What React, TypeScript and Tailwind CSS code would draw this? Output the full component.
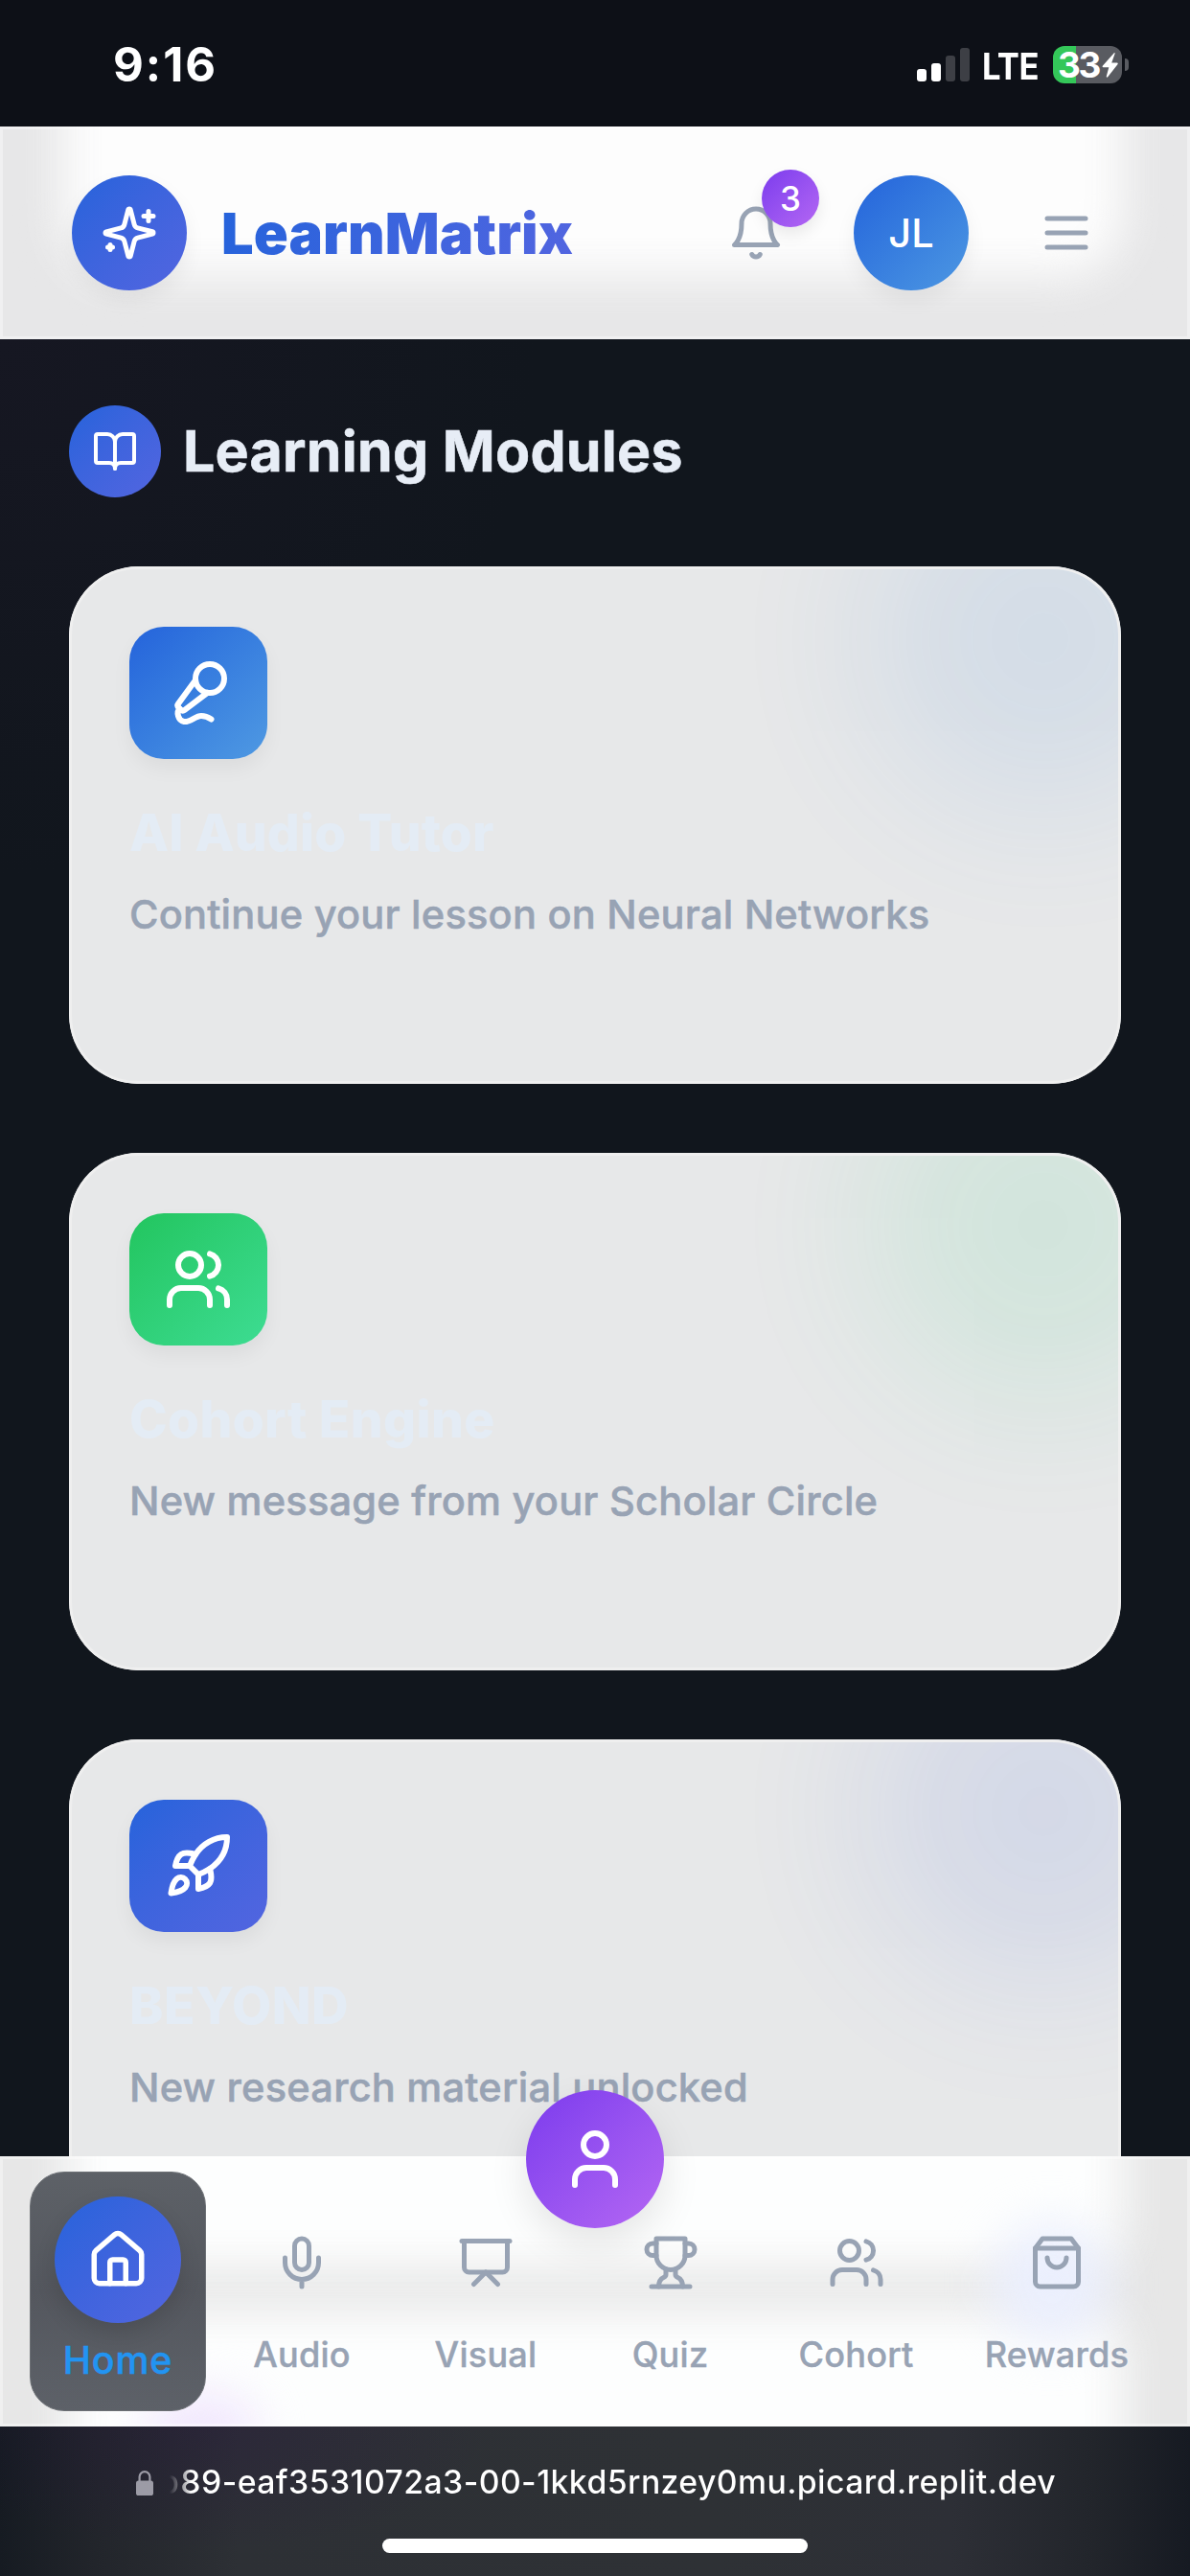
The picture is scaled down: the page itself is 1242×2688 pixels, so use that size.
import React from "react";

type IconProps = { className: string; children: React.ReactNode };

function Icon({ className, children }: IconProps) {
  return (
    <svg
      viewBox="0 0 24 24"
      fill="none"
      stroke="currentColor"
      strokeWidth={2}
      strokeLinecap="round"
      strokeLinejoin="round"
      className={`shrink-0 ${className}`}
    >
      {children}
    </svg>
  );
}

const sparkles = (
  <>
    <path d="M9.937 15.5A2 2 0 0 0 8.5 14.063l-6.135-1.582a.5.5 0 0 1 0-.962L8.5 9.936A2 2 0 0 0 9.937 8.5l1.582-6.135a.5.5 0 0 1 .963 0L14.063 8.5A2 2 0 0 0 15.5 9.937l6.135 1.581a.5.5 0 0 1 0 .964L15.5 14.063a2 2 0 0 0-1.437 1.437l-1.582 6.135a.5.5 0 0 1-.963 0z" />
    <path d="M20 3v4M22 5h-4M4 17v2M5 18H3" />
  </>
);
const bell = (
  <>
    <path d="M6 8a6 6 0 0 1 12 0c0 7 3 9 3 9H3s3-2 3-9" />
    <path d="M10.3 21a1.94 1.94 0 0 0 3.4 0" />
  </>
);
const menu = <path d="M4 6h16M4 12h16M4 18h16" />;
const book = (
  <>
    <path d="M12 7v14" />
    <path d="M3 18a1 1 0 0 1-1-1V4a1 1 0 0 1 1-1h5a4 4 0 0 1 4 4 4 4 0 0 1 4-4h5a1 1 0 0 1 1 1v13a1 1 0 0 1-1 1h-6a3 3 0 0 0-3 3 3 3 0 0 0-3-3z" />
  </>
);
const micVocal = (
  <>
    <path d="m11 7.601-5.994 8.19a1 1 0 0 0 .1 1.298l.817.818a1 1 0 0 0 1.314.087L15.09 12" />
    <path d="M16.5 21.174C15.5 20.5 14.372 20 13 20c-2.058 0-3.928 2.356-6 2-2.072-.356-2.775-3.369-1.5-4.5" />
    <circle cx="16" cy="7" r="5" />
  </>
);
const users = (
  <>
    <path d="M16 21v-2a4 4 0 0 0-4-4H6a4 4 0 0 0-4 4v2" />
    <circle cx="9" cy="7" r="4" />
    <path d="M22 21v-2a4 4 0 0 0-3-3.87M16 3.13a4 4 0 0 1 0 7.75" />
  </>
);
const rocket = (
  <>
    <path d="M4.5 16.5c-1.5 1.26-2 5-2 5s3.74-.5 5-2c.71-.84.7-2.13-.09-2.91a2.18 2.18 0 0 0-2.91-.09z" />
    <path d="m12 15-3-3a22 22 0 0 1 2-3.95A12.88 12.88 0 0 1 22 2c0 2.72-.78 7.5-6 11a22.35 22.35 0 0 1-4 2z" />
    <path d="M9 12H4s.55-3.03 2-4c1.62-1.08 5 0 5 0" />
    <path d="M12 15v5s3.03-.55 4-2c1.08-1.62 0-5 0-5" />
  </>
);
const user = (
  <>
    <path d="M19 21v-2a4 4 0 0 0-4-4H9a4 4 0 0 0-4 4v2" />
    <circle cx="12" cy="7" r="4" />
  </>
);
const house = (
  <>
    <path d="M15 21v-8a1 1 0 0 0-1-1h-4a1 1 0 0 0-1 1v8" />
    <path d="M3 10a2 2 0 0 1 .709-1.528l7-5.999a2 2 0 0 1 2.582 0l7 5.999A2 2 0 0 1 21 10v9a2 2 0 0 1-2 2H5a2 2 0 0 1-2-2z" />
  </>
);
const mic = (
  <>
    <path d="M12 2a3 3 0 0 0-3 3v7a3 3 0 0 0 6 0V5a3 3 0 0 0-3-3Z" />
    <path d="M19 10v2a7 7 0 0 1-14 0v-2M12 19v3" />
  </>
);
const presentation = (
  <>
    <path d="M2 3h20" />
    <path d="M21 3v11a2 2 0 0 1-2 2H5a2 2 0 0 1-2-2V3" />
    <path d="m7 21 5-5 5 5" />
  </>
);
const trophy = (
  <>
    <path d="M6 9H4.5a2.5 2.5 0 0 1 0-5H6M18 9h1.5a2.5 2.5 0 0 0 0-5H18M4 22h16" />
    <path d="M10 14.66V17c0 .55-.47.98-.97 1.21C7.85 18.75 7 20.24 7 22M14 14.66V17c0 .55.47.98.97 1.21C16.15 18.75 17 20.24 17 22" />
    <path d="M18 2H6v7a6 6 0 0 0 12 0V2Z" />
  </>
);
const bag = (
  <>
    <path d="M6 2 3 6v14a2 2 0 0 0 2 2h14a2 2 0 0 0 2-2V6l-3-4Z" />
    <path d="M3 6h18M16 10a4 4 0 0 1-8 0" />
  </>
);

function StatusBar() {
  return (
    <div className="flex h-[132px] shrink-0 items-start justify-between bg-[#0d1017] pl-[118px] pr-[64px] text-white">
      <span className="pt-[38px] text-[49px] font-bold leading-[60px] tracking-[2px]">9:16</span>
      <div className="flex items-start pt-[48px]">
        <div className="flex h-[37px] items-end gap-[5px]">
          <i className="h-[13px] w-[10px] rounded-[3px] bg-white" />
          <i className="h-[19px] w-[10px] rounded-[3px] bg-white" />
          <i className="h-[27px] w-[10px] rounded-[3px] bg-[#3d3f45]" />
          <i className="h-[35px] w-[10px] rounded-[3px] bg-[#3d3f45]" />
        </div>
        <span className="ml-[13px] mt-[1px] inline-block w-[74px] origin-left scale-x-[0.91] text-[38px] font-bold leading-[40px] tracking-[-0.6px]">
          LTE
        </span>
        <div className="flex h-[39px] w-[72px] items-center rounded-[12px] bg-[linear-gradient(90deg,#34c759_24px,#595b61_24px)] pl-[5px]">
          <span className="text-[37px] font-bold leading-[39px] tracking-[-2.4px]">33</span>
          <svg viewBox="0 0 17 26" className="ml-[3px] h-[26px] w-[17px] shrink-0 fill-white">
            <path d="M12.6.4 1 13.6c-.8.9-.4 1.6.5 1.6h5.8L4.8 24.6c-.3 1.2.7 1.6 1.4.7L16.4 12.2c.7-.9.3-1.6-.6-1.6h-5.6L13.6 1c.3-.9-.4-1.2-1-.6z" />
          </svg>
        </div>
        <i className="ml-[3px] mt-[13px] h-[13px] w-[4px] rounded-r-full bg-[#595b61]" />
      </div>
    </div>
  );
}

function Header() {
  return (
    <header className="relative h-[222px] shrink-0 overflow-hidden bg-[#e7e7e8]">
      <div className="absolute -top-[100px] left-[66px] right-[70px] h-[256px] rounded-[60px] bg-[#fdfdfd] blur-[24px]" />
      <div className="relative flex h-full items-center border-[3px] border-white/40 pl-[72px] pr-[96px]">
        <div className="flex size-[120px] items-center justify-center rounded-full bg-linear-to-br from-[#2563db] to-[#5265e0] text-white shadow-[0_10px_22px_rgba(0,0,0,0.06)]">
          <Icon className="size-[60px]">{sparkles}</Icon>
        </div>
        <h1 className="ml-[36px] bg-[linear-gradient(110deg,#2563db,#5265e0)] bg-clip-text text-[59.5px] font-black leading-[84px] tracking-[0.1px] text-transparent">
          LearnMatrix
        </h1>
        <div className="ml-auto flex items-center text-[#98a3b4]">
          <div className="relative">
            <Icon className="size-[60px]">{bell}</Icon>
            <span className="absolute -top-[36px] left-[36px] flex size-[60px] items-center justify-center rounded-full bg-linear-to-br from-[#7c3aed] to-[#b566f3] text-[35px] font-medium leading-none text-white shadow-[0_8px_16px_rgba(0,0,0,0.08)]">
              3
            </span>
          </div>
          <div className="ml-[72px] flex size-[120px] items-center justify-center rounded-full bg-linear-to-br from-[#2563db] to-[#4d97e2] text-[41.5px] font-medium text-white shadow-[0_10px_22px_rgba(0,0,0,0.06)]">
            JL
          </div>
          <Icon className="ml-[72px] size-[60px]">{menu}</Icon>
        </div>
      </div>
    </header>
  );
}

type Module = {
  title: string;
  text: string;
  icon: React.ReactNode;
  tile: string;
  glow: string;
  titleSpacing: string;
};

const modules: Module[] = [
  {
    title: "AI Audio Tutor",
    text: "Continue your lesson on Neural Networks",
    icon: micVocal,
    tile: "from-[#2563db] to-[#4f99e2]",
    glow: "bg-[#3580d8]",
    titleSpacing: "tracking-[0.2px]",
  },
  {
    title: "Cohort Engine",
    text: "New message from your Scholar Circle",
    icon: users,
    tile: "from-[#22c55e] to-[#3ddc92]",
    glow: "bg-[#22cc72]",
    titleSpacing: "tracking-[0.4px]",
  },
  {
    title: "BEYOND",
    text: "New research material unlocked",
    icon: rocket,
    tile: "from-[#2563db] to-[#5265e0]",
    glow: "bg-[#3a5fdc]",
    titleSpacing: "tracking-[0.5px]",
  },
];

function ModuleCard({ title, text, icon, tile, glow, titleSpacing }: Module) {
  return (
    <article className="relative h-[540px] shrink-0 overflow-hidden rounded-[72px] bg-[#e7e8e9]">
      <div className={`absolute -right-[104px] -top-[110px] size-[370px] rounded-full opacity-[0.1] blur-[76px] ${glow}`} />
      <div className="relative h-full rounded-[72px] border-[3px] border-[#efefef] p-[60px]">
        <div className={`flex h-[138px] w-[144px] items-center justify-center rounded-[36px] bg-linear-to-br text-white shadow-[0_10px_20px_rgba(0,0,0,0.05)] ${tile}`}>
          <Icon className="size-[72px]">{icon}</Icon>
        </div>
        <h3 className={`mt-[35px] text-[53.3px] font-extrabold leading-[84px] text-[#e4ecf5] ${titleSpacing}`}>{title}</h3>
        <p className="mt-[7px] whitespace-nowrap text-[41.6px] font-medium leading-[72px] tracking-[0.2px] text-[#98a3b4] [-webkit-text-stroke:0.5px_#98a3b4]">
          {text}
        </p>
      </div>
    </article>
  );
}

const tabs = [
  { label: "Audio", icon: mic, width: "w-[192px]" },
  { label: "Visual", icon: presentation, width: "w-[192px]" },
  { label: "Quiz", icon: trophy, width: "w-[193px]" },
  { label: "Cohort", icon: users, width: "w-[195px]" },
  { label: "Rewards", icon: bag, width: "w-[224px]" },
];

function BottomNav() {
  return (
    <nav className="relative h-[282px] shrink-0 bg-[#e7e7e7]">
      <div className="absolute inset-0 overflow-hidden">
        <div className="absolute -top-[100px] left-[72px] right-[70px] h-[217px] rounded-[40px] bg-[#fdfefe] blur-[24px]" />
        <div className="absolute left-[72px] right-[70px] top-[162px] h-[240px] rounded-[40px] bg-[#fdfefe] blur-[24px]" />
        <div className="absolute left-[1035px] top-[70px] size-[125px] rounded-full bg-[#ebeffd] blur-[24px]" />
        <div className="absolute left-[150px] top-[246px] h-[90px] w-[120px] rounded-full bg-[#f1e8fd] blur-[24px]" />
      </div>
      <div className="relative flex h-full items-start border-[3px] border-white/40 pl-[28px]">
        <a className="mt-[13px] flex h-[250px] w-[184px] shrink-0 flex-col items-center rounded-[36px] border-[1.5px] border-[#6d7176] bg-[linear-gradient(180deg,#5d6167,#54575e_50%,#5d6168)] pt-[25px]">
          <span className="flex size-[132px] items-center justify-center rounded-full bg-linear-to-br from-[#2563db] to-[#5265e0] text-white shadow-[0_10px_22px_rgba(0,0,0,0.12)]">
            <Icon className="size-[66px]">{house}</Icon>
          </span>
          <span className="mt-[12px] text-[39.3px] font-medium leading-[54px] tracking-[0.9px] text-[#2294f2] [-webkit-text-stroke:0.5px_#2294f2]">
            Home
          </span>
        </a>
        <div className="ml-[4px] flex pt-[78px] text-[#98a3b4]">
          {tabs.map((t) => (
            <a key={t.label} className={`flex shrink-0 flex-col items-center ${t.width}`}>
              <Icon className="size-[60px]">{t.icon}</Icon>
              <span className="mt-[42px] text-[36.1px] font-medium leading-[48px] tracking-[0.25px] [-webkit-text-stroke:0.4px_#98a3b4]">
                {t.label}
              </span>
            </a>
          ))}
        </div>
      </div>
      <button className="absolute -top-[69px] left-[549px] flex size-[144px] items-center justify-center rounded-full bg-linear-to-br from-[#7c3aed] to-[#b566f3] text-white shadow-[0_16px_40px_rgba(0,0,0,0.1)]">
        <Icon className="size-[72px]">{user}</Icon>
      </button>
    </nav>
  );
}

function AddressBar() {
  return (
    <div className="flex h-[156px] shrink-0 flex-col items-center bg-[radial-gradient(ellipse_300px_130px_at_215px_0px,rgba(40,15,70,0.25),transparent),linear-gradient(90deg,#161b22,#22252b_8%,#2d3035_20%,#2e3135_60%,#2d2f36_80%,#22252b_92%,#161a22)]">
      <div className="flex h-[115px] items-center self-start pl-[142px]">
        <svg viewBox="0 0 18 26" className="mt-[2px] h-[26px] w-[18px] shrink-0">
          <rect x="0" y="10.5" width="18" height="15.5" rx="2.6" fill="#9c9ba6" />
          <path d="M3.6 11V6.6a5.4 5.4 0 0 1 10.8 0V11" fill="none" stroke="#9c9ba6" strokeWidth="2.2" />
        </svg>
        <span className="ml-[16px] bg-[linear-gradient(90deg,transparent_1px,rgba(255,255,255,0.4)_11px,#fff_24px)] bg-clip-text text-[33.8px] font-medium leading-[48px] text-transparent tracking-[0.4px]">
          <span className="-ml-[10px] mr-[1px] inline-block">b</span>89-eaf3531072a3-00-1kkd5rnzey0mu.picard.replit.dev
        </span>
      </div>
      <div className="mt-[2px] h-[15px] w-[444px] rounded-full bg-white" />
    </div>
  );
}

export default function App() {
  return (
    <div className="flex h-[2688px] w-[1242px] flex-col overflow-hidden bg-[#11161d] font-['Inter',sans-serif]">
      <StatusBar />
      <Header />
      <main className="flex min-h-0 flex-1 flex-col overflow-hidden bg-[radial-gradient(circle_at_0px_0px,#161722,#11161d_560px)] px-[72px] pt-[69px]">
        <div className="flex shrink-0 items-center">
          <div className="flex size-[96px] items-center justify-center rounded-full bg-linear-to-br from-[#2563db] to-[#5265e0] text-white">
            <Icon className="size-[48px]">{book}</Icon>
          </div>
          <h2 className="ml-[23px] text-[59px] font-bold leading-[84px] tracking-[0.25px] text-[#e7edf6] [-webkit-text-stroke:0.6px_#e7edf6]">Learning Modules</h2>
        </div>
        <div className="mt-[72px] flex flex-col gap-[72px]">
          {modules.map((m) => (
            <ModuleCard key={m.title} {...m} />
          ))}
        </div>
      </main>
      <BottomNav />
      <AddressBar />
    </div>
  );
}
